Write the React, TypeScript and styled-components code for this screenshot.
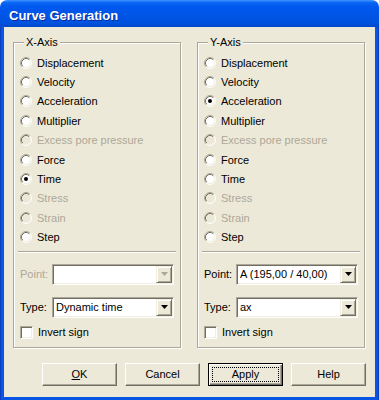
import styled, { createGlobalStyle } from 'styled-components';

const GlobalStyle = createGlobalStyle`
  html, body {
    margin: 0;
    padding: 0;
    background: #fff;
  }
  body {
    font-family: 'Liberation Sans', Arial, sans-serif;
    font-size: 11px;
    color: #000;
  }
`;

const xOptions = [
  { label: 'Displacement' },
  { label: 'Velocity' },
  { label: 'Acceleration' },
  { label: 'Multiplier' },
  { label: 'Excess pore pressure', disabled: true },
  { label: 'Force' },
  { label: 'Time', checked: true },
  { label: 'Stress', disabled: true },
  { label: 'Strain', disabled: true },
  { label: 'Step' },
];

const yOptions = xOptions.map((o) => ({
  ...o,
  checked: o.label === 'Acceleration',
}));

function RadioMark({ checked, disabled }: { checked?: boolean; disabled?: boolean }) {
  return (
    <svg width="12" height="12" viewBox="0 0 12 12">
      <circle cx="6" cy="6" r="4.5" fill={disabled ? '#ECE9D8' : '#fff'} />
      <path d="M2.11 9.89 A5.5 5.5 0 0 1 9.89 2.11" fill="none" stroke="#ACA899" />
      <path d="M9.89 2.11 A5.5 5.5 0 0 1 2.11 9.89" fill="none" stroke="#fff" />
      <path d="M2.82 9.18 A4.5 4.5 0 0 1 9.18 2.82" fill="none" stroke="#716F64" />
      <path d="M9.18 2.82 A4.5 4.5 0 0 1 2.82 9.18" fill="none" stroke="#F1EFE2" />
      {checked && <circle cx="6" cy="6" r="2" fill={disabled ? '#ACA899' : '#000'} />}
    </svg>
  );
}

function Arrow({ disabled }: { disabled?: boolean }) {
  return (
    <svg width="7" height="4" viewBox="0 0 7 4">
      <path d="M0 0 H7 L3.5 4 Z" fill={disabled ? '#ACA899' : '#000'} />
    </svg>
  );
}

function AxisGroup({
  title,
  options,
  point,
  type,
}: {
  title: string;
  options: { label: string; disabled?: boolean; checked?: boolean }[];
  point?: string;
  type: string;
}) {
  return (
    <Group>
      <Legend>{title}</Legend>
      {options.map((o) => (
        <RadioRow key={o.label} $disabled={o.disabled}>
          <RadioMark checked={o.checked} disabled={o.disabled} />
          <span>{o.label}</span>
        </RadioRow>
      ))}
      <Separator />
      <FieldRow $top={11}>
        <FieldLabel $disabled={!point}>Point:</FieldLabel>
        <Combo>
          <ComboValue>{point}</ComboValue>
          <DropButton>
            <Arrow disabled={!point} />
          </DropButton>
        </Combo>
      </FieldRow>
      <FieldRow $top={12}>
        <FieldLabel>Type:</FieldLabel>
        <Combo>
          <ComboValue>{type}</ComboValue>
          <DropButton>
            <Arrow />
          </DropButton>
        </Combo>
      </FieldRow>
      <CheckRow>
        <CheckBox />
        <span>Invert sign</span>
      </CheckRow>
    </Group>
  );
}

export default function App() {
  return (
    <>
      <GlobalStyle />
      <Window>
        <TitleBar>Curve Generation</TitleBar>
        <Frame>
          <Body>
            <Groups>
              <AxisGroup title="X-Axis" options={xOptions} type="Dynamic time" />
              <AxisGroup
                title="Y-Axis"
                options={yOptions}
                point="A (195,00 / 40,00)"
                type="ax"
              />
            </Groups>
            <ButtonRow>
              <Button>
                <u>O</u>K
              </Button>
              <Button>Cancel</Button>
              <Button $default>Apply</Button>
              <Button>Help</Button>
            </ButtonRow>
          </Body>
        </Frame>
      </Window>
    </>
  );
}

const Window = styled.div`
  width: 379px;
  height: 400px;
  display: flex;
  flex-direction: column;
`;

const TitleBar = styled.div`
  flex: none;
  height: 27px;
  box-sizing: border-box;
  padding: 3px 0 0 9px;
  display: flex;
  align-items: center;
  border-radius: 7px 7px 0 0;
  background: linear-gradient(
    180deg,
    #3d95ff 0%,
    #0a66f4 10%,
    #0058ee 25%,
    #0055e6 55%,
    #0052de 85%,
    #0047ca 100%
  );
  color: #fff;
  font: bold 13px 'Liberation Sans', Arial, sans-serif;
  text-shadow: 1px 1px 0 #0a2a9a;
`;

const Frame = styled.div`
  flex: 1;
  display: flex;
  padding: 0 4px 3px 4px;
  background: #0755e4;
  box-shadow: inset 1px 0 #0a3fc0, inset -1px 0 #0a3fc0;
`;

const Body = styled.div`
  flex: 1;
  display: flex;
  flex-direction: column;
  background: #ece9d8;
  padding: 9px 10px 0 9px;
`;

const Groups = styled.div`
  display: flex;
  gap: 16px;
`;

const Group = styled.fieldset`
  flex: 1;
  min-width: 0;
  margin: 0;
  padding: 4px 6px 8px 6px;
  border: 1px solid #aca899;
  box-shadow: inset 1px 1px 0 #fff, 1px 1px 0 #fff;
  display: flex;
  flex-direction: column;
`;

const Legend = styled.legend`
  margin-left: 4px;
  padding: 0 2px;
  line-height: 13px;
  background: #ece9d8;
`;

const RadioRow = styled.div<{ $disabled?: boolean }>`
  height: 19.4px;
  display: flex;
  align-items: center;
  gap: 5px;
  color: ${(p) => (p.$disabled ? '#aca899' : '#000')};

  svg {
    flex: none;
  }
`;

const Separator = styled.div`
  margin: 4px -2px 0;
  height: 0;
  border-top: 1px solid #aca899;
  border-bottom: 1px solid #fff;
`;

const FieldRow = styled.div<{ $top: number }>`
  margin-top: ${(p) => p.$top}px;
  display: flex;
  align-items: center;
`;

const FieldLabel = styled.span<{ $disabled?: boolean }>`
  width: 32px;
  flex: none;
  color: ${(p) => (p.$disabled ? '#aca899' : '#000')};
`;

const Combo = styled.div`
  flex: 1;
  height: 21px;
  box-sizing: border-box;
  display: flex;
  padding: 1px;
  background: #fff;
  border: 1px solid;
  border-color: #aca899 #fff #fff #aca899;
  box-shadow: inset 1px 1px 0 #716f64, inset -1px -1px 0 #f1efe2;
`;

const ComboValue = styled.span`
  flex: 1;
  padding-left: 2px;
  line-height: 17px;
  white-space: nowrap;
  overflow: hidden;
`;

const DropButton = styled.span`
  width: 16px;
  height: 17px;
  box-sizing: border-box;
  display: flex;
  align-items: center;
  justify-content: center;
  background: #ece9d8;
  border: 1px solid;
  border-color: #f1efe2 #716f64 #716f64 #f1efe2;
  box-shadow: inset 1px 1px 0 #fff, inset -1px -1px 0 #aca899;
`;

const CheckRow = styled.div`
  margin-top: 8px;
  display: flex;
  align-items: center;
  gap: 5px;
`;

const CheckBox = styled.span`
  width: 13px;
  height: 13px;
  box-sizing: border-box;
  background: #fff;
  border: 1px solid;
  border-color: #aca899 #fff #fff #aca899;
  box-shadow: inset 1px 1px 0 #716f64, inset -1px -1px 0 #f1efe2;
`;

const ButtonRow = styled.div`
  margin: 15px -1px 0 0;
  display: flex;
  justify-content: flex-end;
  gap: 8px;
`;

const Button = styled.button<{ $default?: boolean }>`
  width: 75px;
  height: 23px;
  padding: 0;
  font: 11px 'Liberation Sans', Arial, sans-serif;
  color: #000;
  background: #ece9d8;
  border: 1px solid;
  border-color: ${(p) => (p.$default ? '#000' : '#fff #716f64 #716f64 #fff')};
  box-shadow: ${(p) =>
    p.$default
      ? 'inset 1px 1px 0 #fff, inset -1px -1px 0 #716f64, inset -2px -2px 0 #aca899'
      : 'inset -1px -1px 0 #aca899'};
  outline: ${(p) => (p.$default ? '1px dotted #000' : 'none')};
  outline-offset: -5px;

  u {
    text-decoration: underline;
  }
`;
